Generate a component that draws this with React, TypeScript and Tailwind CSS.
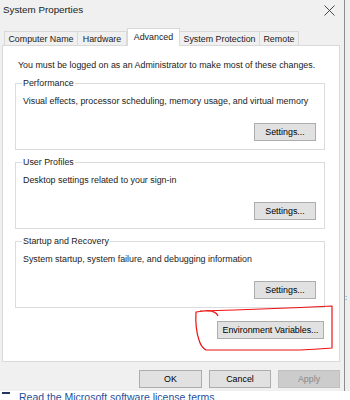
const tabs = [
  { label: 'Computer Name', w: 'w-[74px]' },
  { label: 'Hardware', w: 'w-[50px]' },
  { label: 'Advanced', w: 'w-[53px]', active: true },
  { label: 'System Protection', w: 'w-[81px]' },
  { label: 'Remote', w: 'w-[40px]' },
]

const WinButton = ({ label, className = '' }: { label: string; className?: string }) => (
  <button
    className={`h-[18px] border border-[#adadad] bg-[#e1e1e1] text-[#000] flex items-center justify-center leading-none ${className}`}
  >
    {label}
  </button>
)

const Group = ({ title, desc, focused }: { title: string; desc: string; focused?: boolean }) => (
  <fieldset className="border border-[#dcdcdc] pl-[6px] pr-[8px] pb-[8px] flex flex-col">
    <legend className="px-[1px] leading-[12px] h-[12px]">{title}</legend>
    <p className="mt-[6px] leading-[12px] pl-[1px] whitespace-nowrap">{desc}</p>
    <div className="mt-[16px] flex justify-end">
      <WinButton
        label="Settings..."
        className={`w-[62px] ${focused ? 'border-[#0078d7]' : ''}`}
      />
    </div>
  </fieldset>
)

export default function App() {
  return (
    <div
      className="relative w-[350px] h-[400px] overflow-hidden bg-white flex flex-col text-[8.9px] text-[#1b1b1b]"
      style={{ fontFamily: '"Liberation Sans", Arial, sans-serif' }}
    >
      <div className="flex h-[391px] shrink-0">
        <div className="w-[345px] bg-[#f0f0f0] border-r border-[#8c8c8c] flex flex-col">
          {/* title bar */}
          <div className="h-[21px] flex items-center justify-between pl-[3px] pr-[9px]">
            <span className="text-[9.8px] text-[#222]">System Properties</span>
            <svg width="11" height="11" viewBox="0 0 11 11" className="mt-[-1px]">
              <path d="M0.5 0.5 L10.5 10.5 M10.5 0.5 L0.5 10.5" stroke="#333" strokeWidth="0.9" fill="none" />
            </svg>
          </div>

          {/* tabs */}
          <div className="flex items-end h-[24px] pl-[4px] relative z-10">
            {tabs.map((t) =>
              t.active ? (
                <div
                  key={t.label}
                  className={`${t.w} h-[18px] -mb-px bg-white border border-b-0 border-[#d9d9d9] flex items-start justify-center pt-[2px] leading-[12px]`}
                >
                  {t.label}
                </div>
              ) : (
                <div
                  key={t.label}
                  className={`${t.w} h-[14px] border border-[#d9d9d9] border-b-0 -ml-px first:ml-0 flex items-center justify-center leading-[12px] bg-[#f0f0f0]`}
                >
                  {t.label}
                </div>
              ),
            )}
          </div>

          {/* panel */}
          <div className="ml-[2px] w-[338px] bg-white border border-[#d9d9d9] pt-[13px] pb-[22px] pl-[12px] pr-[14px] flex flex-col">
            <p className="leading-[12px] pl-[3px] whitespace-nowrap">
              You must be logged on as an Administrator to make most of these changes.
            </p>
            <div className="mt-[6px] flex flex-col gap-[6px]">
              <Group
                title="Performance"
                desc="Visual effects, processor scheduling, memory usage, and virtual memory"
                focused
              />
              <Group title="User Profiles" desc="Desktop settings related to your sign-in" />
              <Group title="Startup and Recovery" desc="System startup, system failure, and debugging information" />
            </div>
            <div className="mt-[13px] flex justify-end pr-[1px]">
              <WinButton label="Environment Variables..." className="w-[107px]" />
            </div>
          </div>

          {/* bottom buttons */}
          <div className="mt-[8px] flex justify-end gap-[7px] pr-[4px]">
            <WinButton label="OK" className="w-[63px]" />
            <WinButton label="Cancel" className="w-[62px]" />
            <button className="w-[62px] h-[18px] border border-[#bfbfbf] bg-[#cccccc] text-[#8a8a8a] leading-none">
              Apply
            </button>
          </div>
        </div>
        <div className="flex-1 bg-[#eeeeee] pt-[294px] text-[#1a5fb4] text-[8px] leading-[8px] overflow-hidden">:</div>
      </div>

      {/* page behind the dialog */}
      <div className="flex items-start pl-[2px] h-[9px] overflow-hidden">
        <span className="w-[8px] h-[2px] mt-[1px] bg-[#22375e]" />
        <span className="text-[10.5px] leading-[11px] text-[#1f4e9c] ml-[9px] mt-[1px] whitespace-nowrap">
          Read the Microsoft software license terms
        </span>
      </div>

      {/* red annotation */}
      <svg className="absolute left-0 top-0 pointer-events-none" width="350" height="400">
        <path
          d="M218 316 Q216 310 204 311 L196 312 Q195 328 199 340 Q201 347 206 350 L300 350 Q320 349 332 348 L332 306 Q270 309 200 311"
          stroke="#ee1111"
          strokeWidth="1.2"
          fill="none"
          strokeLinejoin="round"
        />
      </svg>
    </div>
  )
}
